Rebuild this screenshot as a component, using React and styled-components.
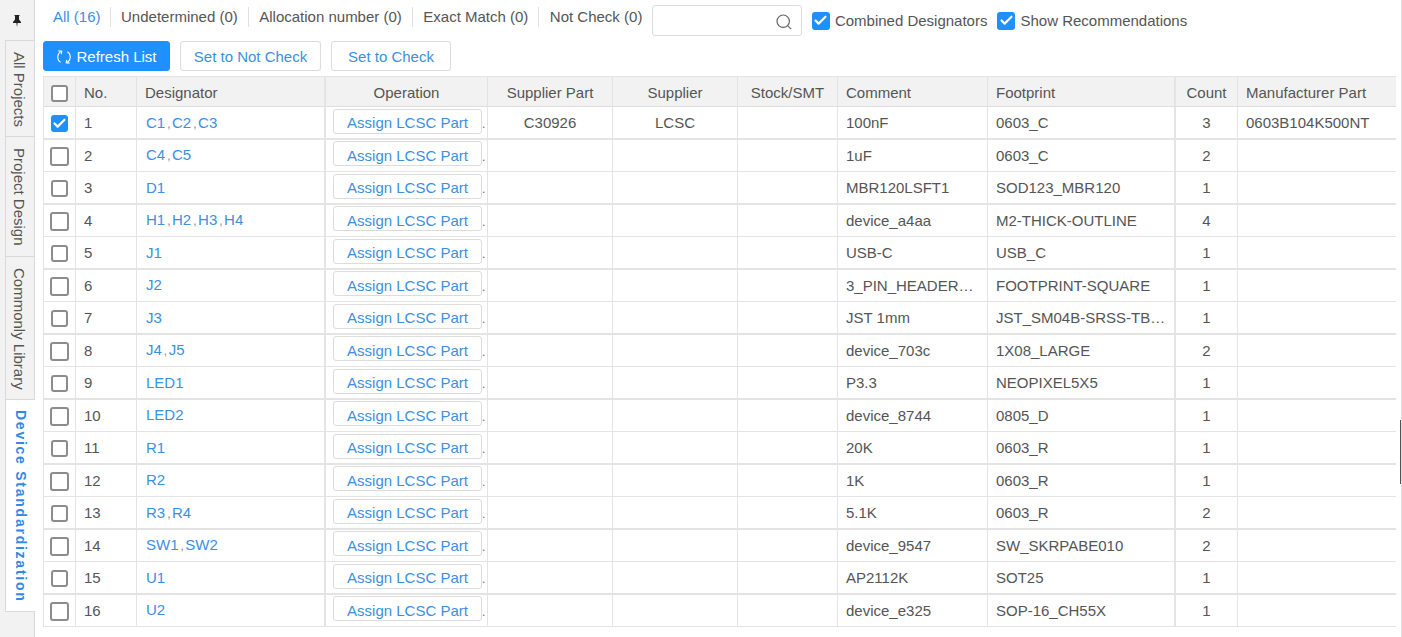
import React from "react";
import styled, { createGlobalStyle } from "styled-components";
import { Check } from "lucide-react";

const Global = createGlobalStyle`
  html, body { margin: 0; padding: 0; background: #fff; overflow: hidden; }
  body { font-family: "Liberation Sans", Arial, sans-serif; font-size: 15px; color: #555; }
  * { box-sizing: border-box; }
`;

const Page = styled.div`
  position: relative;
  display: flex;
  width: 1402px;
  height: 637px;
  overflow: hidden;
  border-right: 1px solid #dcdcdc;
`;

const Side = styled.aside`
  width: 35px;
  flex: none;
  background: #f2f2f2;
  border-right: 1px solid #d9d9d9;
  display: flex;
  flex-direction: column;
`;

const PinBox = styled.div`
  height: 40px;
  display: flex;
  align-items: center;
  justify-content: center;
  color: #222;
  padding-top: 1px;
`;

const Tab = styled.div`
  margin-left: 5px;
  width: ${p => (p.$active ? "30px" : "29px")};
  height: ${p => p.$h}px;
  writing-mode: vertical-rl;
  display: flex;
  align-items: center;
  padding-top: ${p => p.$pad}px;
  padding-right: 1px;
  line-height: 29px;
  border: 1px solid #d9d9d9;
  border-top: ${p => (p.$first ? "1px solid #d9d9d9" : "none")};
  border-right: none;
  background: ${p => (p.$active ? "#fff" : "#f2f2f2")};
  color: ${p => (p.$active ? "#2e8ae6" : "#555")};
  font-size: ${p => (p.$active ? "14px" : "15px")};
  font-weight: ${p => (p.$active ? 700 : 400)};
  letter-spacing: ${p => (p.$active ? "1.75px" : "0")};
  white-space: nowrap;
`;

const Main = styled.main`
  flex: 1;
  min-width: 0;
  padding: 5px 0 0 8px;
  display: flex;
  flex-direction: column;
`;

const FilterBar = styled.div`
  height: 31px;
  display: flex;
  align-items: flex-start;
`;

const Filter = styled.a`
  height: 20px;
  margin-top: 2px;
  line-height: 20px;
  padding: 0 ${p => (p.$last ? "9.5px" : "10px")} 0 10.5px;
  color: ${p => (p.$active ? "#3d8fe0" : "#555")};
  border-right: ${p => (p.$last ? "none" : "1px solid #e0e0e0")};
  white-space: nowrap;
  &:first-child { padding: 0 9px 0 10px; }
`;

const Search = styled.div`
  width: 150px;
  height: 31px;
  border: 1px solid #dcdcdc;
  border-radius: 3px;
  display: flex;
  align-items: center;
  justify-content: flex-end;
  padding: 2px 9px 0 0;
  color: #666;
`;

const Toggle = styled.label`
  display: flex;
  align-items: center;
  gap: 5px;
  height: 31px;
  margin-left: ${p => p.$ml}px;
  white-space: nowrap;
`;

const Box = styled.span`
  width: ${p => (p.$big ? 19 : p.$toggle ? 18 : 17)}px;
  height: ${p => (p.$big ? 19 : p.$toggle ? 18 : 17)}px;
  flex: none;
  border-radius: 3px;
  border: ${p => (p.$on ? "none" : "2px solid #8c8c8c")};
  background: ${p => (p.$on ? "#1e90ff" : "#fff")};
  color: #fff;
  display: inline-flex;
  align-items: center;
  justify-content: center;
`;

const ActionBar = styled.div`
  height: 35px;
  margin-top: 5px;
  display: flex;
  gap: 10px;
  align-items: flex-start;
`;

const Btn = styled.button`
  height: 30px;
  width: ${p => p.$w}px;
  border-radius: 3px;
  font: inherit;
  padding: 1px 0 0;
  display: flex;
  align-items: center;
  justify-content: center;
  gap: 4px;
  border: 1px solid ${p => (p.$primary ? "#1e90ff" : "#dcdcdc")};
  background: ${p => (p.$primary ? "#1e90ff" : "#fff")};
  color: ${p => (p.$primary ? "#fff" : "#3d8fe0")};
`;

const Table = styled.div`
  width: 1353px;
  display: flex;
  flex-direction: column;
`;

const HeadRow = styled.div`
  display: flex;
  height: 31px;
  background: #f2f2f2;
  border-top: 1px solid #e4e4e4;
  border-bottom: 1px solid #dedede;
  border-left: 1px solid #e4e4e4;
`;

const Row = styled.div`
  display: flex;
  height: ${p => (p.$odd ? 33 : 32)}px;
  border-left: 1px solid #e4e4e4;
  border-bottom: ${p => (p.$odd ? "2px solid #e4e4e4" : "1px solid #e4e4e4")};
`;

const Cell = styled.div`
  flex: none;
  width: ${p => p.$w}px;
  display: flex;
  align-items: center;
  justify-content: ${p => (p.$c ? "center" : "flex-start")};
  padding: ${p => (p.$head ? "2px" : "0")} ${p => (p.$c ? "0" : "8px")} 0;
  border-right: ${p => p.$br ?? 1}px solid #e4e4e4;
  white-space: nowrap;
  overflow: hidden;
  &:last-child { border-right: none; }
`;

const CheckCell = styled(Cell)`
  padding: ${p => (p.$head ? "4px" : "2px")} 0 0;
`;

const OpCell = styled(Cell)`
  padding: ${p => (p.$odd ? "2px" : "1px")} 0 0 7px;
  align-items: flex-start;
  justify-content: flex-start;
`;

const Des = styled.span`
  color: #3d8fe0;
  margin-left: 1px;
  margin-bottom: ${p => (p.$up ? "2px" : "0")};
`;

const Comma = styled.span`
  color: #888;
  font-size: 12px;
  padding: 0 1.5px 0 2px;
`;

const OpWrap = styled.div`
  display: flex;
  align-items: baseline;
`;

const Assign = styled.button`
  width: 149px;
  height: 25px;
  border: 1px solid #dcdcdc;
  border-radius: 3px;
  background: #fff;
  color: #3d8fe0;
  font: inherit;
  padding: ${p => (p.$odd ? "2px" : "4px")} 0 0;
  flex: none;
`;

const Dot = styled.span`
  color: #666;
  font-size: 12px;
`;

const Thumb = styled.div`
  position: absolute;
  right: 0;
  top: 420px;
  width: 1px;
  height: 64px;
  background: #555;
`;

const widths = [32, 61, 189, 162, 125, 125, 100, 150, 188, 62, 158];
const borders = [1, 1, 2, 1, 1, 1, 1, 1, 2, 1, 0];
const heads = ["", "No.", "Designator", "Operation", "Supplier Part", "Supplier", "Stock/SMT", "Comment", "Footprint", "Count", "Manufacturer Part"];
const centered = [true, false, false, true, true, true, true, false, false, true, false];

const rows = [
  [["C1", "C2", "C3"], "100nF", "0603_C", 3, "C30926", "LCSC", "0603B104K500NT"],
  [["C4", "C5"], "1uF", "0603_C", 2],
  [["D1"], "MBR120LSFT1", "SOD123_MBR120", 1],
  [["H1", "H2", "H3", "H4"], "device_a4aa", "M2-THICK-OUTLINE", 4],
  [["J1"], "USB-C", "USB_C", 1],
  [["J2"], "3_PIN_HEADER…", "FOOTPRINT-SQUARE", 1],
  [["J3"], "JST 1mm", "JST_SM04B-SRSS-TB…", 1],
  [["J4", "J5"], "device_703c", "1X08_LARGE", 2],
  [["LED1"], "P3.3", "NEOPIXEL5X5", 1],
  [["LED2"], "device_8744", "0805_D", 1],
  [["R1"], "20K", "0603_R", 1],
  [["R2"], "1K", "0603_R", 1],
  [["R3", "R4"], "5.1K", "0603_R", 2],
  [["SW1", "SW2"], "device_9547", "SW_SKRPABE010", 2],
  [["U1"], "AP2112K", "SOT25", 1],
  [["U2"], "device_e325", "SOP-16_CH55X", 1],
];

const PinIcon = () => (
  <svg width="8" height="12" viewBox="0 0 8 12" aria-hidden="true">
    <path d="M1.5 0h5v1H6v3.5L8 7v1H4.6L4 12l-.6-4H0V7l2-2.5V1h-.5z" fill="currentColor" />
  </svg>
);

const RefreshIcon = () => (
  <svg width="16" height="16" viewBox="0 0 16 16" fill="none" stroke="#fff" strokeWidth="1.1" aria-hidden="true">
    <path d="M5.8 2.2A6.2 6.2 0 0 0 4.6 13.2" />
    <path d="M2.4 1.9l3.4.3-.5 3" />
    <path d="M10.2 13.8A6.2 6.2 0 0 0 11.4 2.8" />
    <path d="M13.6 14.1l-3.4-.3.5-3" />
  </svg>
);

const SearchIcon = () => (
  <svg width="16" height="16" viewBox="0 0 16 16" fill="none" stroke="currentColor" strokeWidth="1.2" aria-hidden="true">
    <circle cx="7.2" cy="7.2" r="6.2" />
    <path d="M11.8 11.8l3.4 3.4" />
  </svg>
);

const Checkbox = ({ on, big, toggle }) => (
  <Box $on={on} $big={big} $toggle={toggle}>{on && <Check size={15} strokeWidth={3.4} />}</Box>
);

const filters = ["All (16)", "Undetermined (0)", "Allocation number (0)", "Exact Match (0)", "Not Check (0)"];

export default function App() {
  return (
    <Page>
      <Global />
      <Side>
        <PinBox><PinIcon /></PinBox>
        <Tab $first $h={97} $pad={11}>All Projects</Tab>
        <Tab $h={120} $pad={11}>Project Design</Tab>
        <Tab $h={143} $pad={11}>Commonly Library</Tab>
        <Tab $active $h={212} $pad={10}>Device Standardization</Tab>
      </Side>
      <Main>
        <FilterBar>
          {filters.map((f, i) => (
            <Filter key={f} $active={i === 0} $last={i === filters.length - 1}>{f}</Filter>
          ))}
          <Search><SearchIcon /></Search>
          <Toggle $ml={10}><Checkbox on toggle />Combined Designators</Toggle>
          <Toggle $ml={10}><Checkbox on toggle />Show Recommendations</Toggle>
        </FilterBar>
        <ActionBar>
          <Btn $primary $w={127}><RefreshIcon />Refresh List</Btn>
          <Btn $w={141}>Set to Not Check</Btn>
          <Btn $w={120}>Set to Check</Btn>
        </ActionBar>
        <Table>
          <HeadRow>
            {heads.map((h, i) =>
              i === 0 ? (
                <CheckCell key={i} $head $w={widths[i]} $c><Checkbox /></CheckCell>
              ) : (
                <Cell key={i} $head $w={widths[i]} $c={centered[i]} $br={borders[i]}>{h}</Cell>
              )
            )}
          </HeadRow>
          {rows.map((r, idx) => {
            const odd = idx % 2 === 0;
            const [des, comment, fp, count, part, supplier, mfr] = r;
            const cells = [
              idx + 1,
              <Des key="d" $up={!odd}>
                {des.map((d, j) => (
                  <React.Fragment key={d}>
                    {j > 0 && <Comma>,</Comma>}
                    {d}
                  </React.Fragment>
                ))}
              </Des>,
              null,
              part, supplier, "", comment, fp, count, mfr,
            ];
            return (
              <Row key={idx} $odd={odd}>
                <CheckCell $w={widths[0]} $c>
                  <Checkbox on={idx === 0} big={!odd} />
                </CheckCell>
                {cells.map((content, k) => {
                  const i = k + 1;
                  return i === 3 ? (
                    <OpCell key={i} $w={widths[i]} $br={borders[i]} $odd={odd}>
                      <OpWrap>
                        <Assign $odd={odd}>Assign LCSC Part</Assign>
                        <Dot>.</Dot>
                      </OpWrap>
                    </OpCell>
                  ) : (
                    <Cell key={i} $w={widths[i]} $c={centered[i]} $br={borders[i]}>
                      {content}
                    </Cell>
                  );
                })}
              </Row>
            );
          })}
        </Table>
      </Main>
      <Thumb />
    </Page>
  );
}
